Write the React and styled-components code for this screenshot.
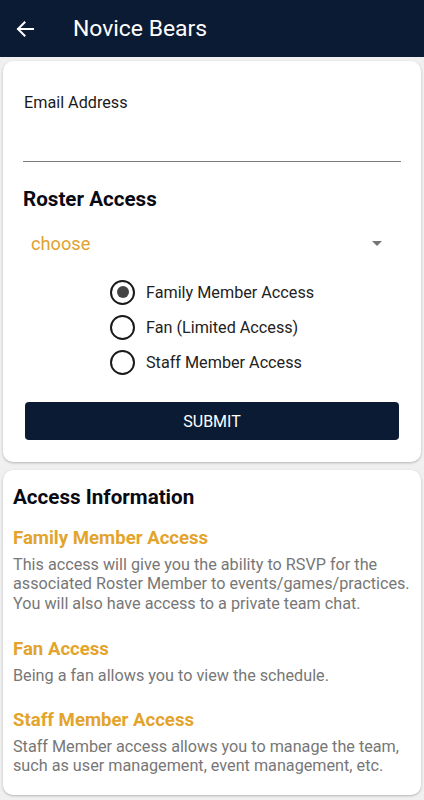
import React from "react";
import styled, { createGlobalStyle } from "styled-components";

const Global = createGlobalStyle`
  html, body { margin: 0; padding: 0; background: #f0f0f0; }
  body { font-family: Roboto, "Liberation Sans", sans-serif; }
  * { box-sizing: border-box; }
`;

const Page = styled.div`
  width: 424px;
  min-height: 800px;
  background: #f0f0f0;
  display: flex;
  flex-direction: column;
`;

const Header = styled.header`
  height: 57px;
  background: #0c1b34;
  display: flex;
  align-items: center;
  padding-left: 15px;
  gap: 38px;
`;

const BackButton = styled.div`
  width: 20px;
  height: 20px;
  display: flex;
  align-items: center;
  justify-content: center;
`;

const Title = styled.h1`
  margin: 0;
  color: #fff;
  font-size: 22.9px;
  font-weight: 400;
`;

const Card = styled.section`
  background: #fff;
  margin: ${(p) => p.$mt}px 3px 0 3px;
  border-radius: 10px;
  box-shadow: 0 1px 3px rgba(0, 0, 0, 0.18), 0 1px 2px rgba(0, 0, 0, 0.08);
  padding: ${(p) => p.$pad};
  display: flex;
  flex-direction: column;
`;

const FieldLabel = styled.label`
  font-size: 16.2px;
  color: #1a1a1a;
  line-height: 18px;
  margin-left: 1px;
`;

const InputLine = styled.div`
  height: 50px;
  border-bottom: 1.5px solid #7a7a7a;
`;

const SectionTitle = styled.h2`
  margin: ${(p) => p.$mt || 0}px 0 0 0;
  font-size: 20.6px;
  font-weight: 700;
  color: #0a0a14;
  line-height: 22px;
`;

const Select = styled.div`
  margin-top: 22px;
  display: flex;
  align-items: center;
  justify-content: space-between;
  padding: 0 19px 0 8px;
  height: 22px;
`;

const SelectText = styled.span`
  color: #dfa22e;
  font-size: 18.2px;
`;

const Caret = styled.div`
  width: 0;
  height: 0;
  border-left: 5px solid transparent;
  border-right: 5px solid transparent;
  border-top: 5px solid #757575;
`;

const RadioGroup = styled.div`
  margin-top: 26px;
  padding-left: 86px;
  display: flex;
  flex-direction: column;
  gap: 11px;
`;

const RadioRow = styled.div`
  display: flex;
  align-items: center;
  gap: 11px;
  height: 24px;
`;

const RadioCircle = styled.div`
  width: 25px;
  height: 25px;
  margin-left: 1px;
  border-radius: 50%;
  border: 2px solid #1a1a1a;
  display: flex;
  align-items: center;
  justify-content: center;
  &::after {
    content: "";
    width: 12px;
    height: 12px;
    border-radius: 50%;
    background: ${(p) => (p.$checked ? "#444" : "transparent")};
  }
`;

const RadioLabel = styled.span`
  font-size: 16.2px;
  color: #222;
`;

const SubmitButton = styled.button`
  margin: 28px 2px 0 2px;
  height: 38px;
  background: #0c1b34;
  color: #fff;
  border: none;
  border-radius: 4px;
  font-family: Roboto, "Liberation Sans", sans-serif;
  font-size: 16px;
`;

const InfoTitle = styled.h3`
  margin: ${(p) => p.$mt}px 0 0 0;
  font-size: 18.6px;
  font-weight: 700;
  color: #e3a42c;
  line-height: 20px;
`;

const InfoText = styled.p`
  margin: 7px 0 0 0;
  font-size: 16.2px;
  line-height: 19.4px;
  color: #777;
`;

const items = [
  {
    title: "Family Member Access",
    text:
      "This access will give you the ability to RSVP for the associated Roster Member to events/games/practices. You will also have access to a private team chat.",
    mt: 20,
  },
  {
    title: "Fan Access",
    text: "Being a fan allows you to view the schedule.",
    mt: 26,
  },
  {
    title: "Staff Member Access",
    text:
      "Staff Member access allows you to manage the team, such as user management, event management, etc.",
    mt: 24,
  },
];

const radios = [
  { label: "Family Member Access", checked: true },
  { label: "Fan (Limited Access)", checked: false },
  { label: "Staff Member Access", checked: false },
];

export default function App() {
  return (
    <Page>
      <Global />
      <Header>
        <BackButton>
          <svg width="18" height="16" viewBox="0 0 18 16" fill="none">
            <path d="M17 8H2M8.5 1.5L2 8l6.5 6.5" stroke="#fff" strokeWidth="2" strokeLinecap="square" />
          </svg>
        </BackButton>
        <Title>Novice Bears</Title>
      </Header>

      <Card $mt={4} $pad="33px 20px 22px 20px">
        <FieldLabel>Email Address</FieldLabel>
        <InputLine />
        <SectionTitle $mt={26}>Roster Access</SectionTitle>
        <Select>
          <SelectText>choose</SelectText>
          <Caret />
        </Select>
        <RadioGroup>
          {radios.map((r) => (
            <RadioRow key={r.label}>
              <RadioCircle $checked={r.checked} />
              <RadioLabel>{r.label}</RadioLabel>
            </RadioRow>
          ))}
        </RadioGroup>
        <SubmitButton>SUBMIT</SubmitButton>
      </Card>

      <Card $mt={8} $pad="16px 10px 20px 10px">
        <SectionTitle>Access Information</SectionTitle>
        {items.map((it) => (
          <React.Fragment key={it.title}>
            <InfoTitle $mt={it.mt}>{it.title}</InfoTitle>
            <InfoText>{it.text}</InfoText>
          </React.Fragment>
        ))}
      </Card>
    </Page>
  );
}
